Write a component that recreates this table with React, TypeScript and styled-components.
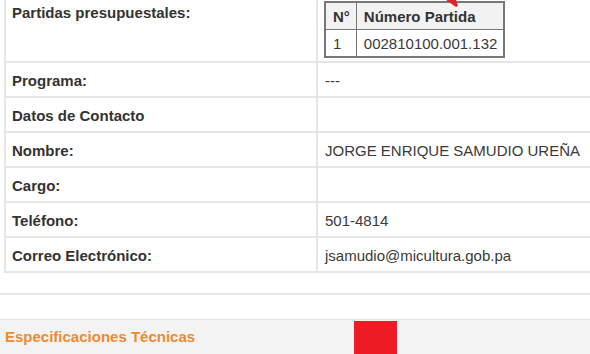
import styled, { createGlobalStyle } from 'styled-components';

const GlobalStyle = createGlobalStyle`
  html, body {
    margin: 0;
    padding: 0;
    overflow: hidden;
    background: #fff;
  }
  body {
    font-family: "Liberation Sans", Arial, sans-serif;
    font-size: 15px;
    line-height: 17px;
    color: #333;
  }
`;

const Page = styled.div`
  position: relative;
  width: 590px;
  height: 354px;
  overflow: hidden;
`;

const InfoTable = styled.div`
  margin-left: 4px;
  width: 660px;
  border-left: 2px solid #e6e6e6;
`;

const Row = styled.div<{ $tall?: boolean }>`
  display: grid;
  grid-template-columns: 312px 1fr;
  border-bottom: 2px solid #e6e6e6;
  height: ${(p) => (p.$tall ? '61px' : '33px')};
`;

const Label = styled.div<{ $top?: boolean }>`
  display: flex;
  align-items: ${(p) => (p.$top ? 'flex-start' : 'center')};
  padding: ${(p) => (p.$top ? '4px 6px 0' : '1px 6px 0')};
  font-weight: bold;
  color: #333;
  border-right: 2px solid #e6e6e6;
`;

const Value = styled.div<{ $top?: boolean }>`
  display: flex;
  align-items: ${(p) => (p.$top ? 'flex-start' : 'center')};
  padding: ${(p) => (p.$top ? '1px 6px 0' : '1px 7px 0')};
  color: #3a3a3a;
`;

// tabla interna de partidas
const Partidas = styled.table`
  border-collapse: collapse;
  border: 2px solid #777;

  th, td {
    border: 1px solid #777;
    padding: 5px 6px 4px 7px;
    text-align: left;
    white-space: nowrap;
  }

  th {
    background: #f2f2f2;
    font-weight: bold;
    color: #333;
  }

  td {
    color: #3a3a3a;
  }
`;

const Arrow = styled.svg`
  position: absolute;
  left: 444px;
  top: 0;
`;

const Spacer = styled.div`
  height: 20px;
`;

const Divider = styled.div`
  height: 2px;
  background: #e6e6e6;
`;

const Section = styled.div`
  margin-top: 24px;
  border-top: 1px solid #e2e2e2;
  background: #f3f3f3;
  height: 60px;
  padding: 8px 5px 0;
  box-sizing: border-box;
`;

const SectionTitle = styled.div`
  font-weight: bold;
  color: #ef8a2f;
`;

const Marker = styled.div`
  position: absolute;
  left: 354px;
  top: 321px;
  width: 43px;
  height: 40px;
  background: #ed1c24;
`;

const rows: [string, string][] = [
  ['Programa:', '---'],
  ['Datos de Contacto', ''],
  ['Nombre:', 'JORGE ENRIQUE SAMUDIO UREÑA'],
  ['Cargo:', ''],
  ['Teléfono:', '501-4814'],
  ['Correo Electrónico:', 'jsamudio@micultura.gob.pa'],
];

export default function App() {
  return (
    <Page>
      <GlobalStyle />
      <InfoTable>
        {/* partidas */}
        <Row $tall>
          <Label $top>Partidas presupuestales:</Label>
          <Value $top>
            <Partidas>
              <thead>
                <tr>
                  <th>N°</th>
                  <th>Número Partida</th>
                </tr>
              </thead>
              <tbody>
                <tr>
                  <td>1</td>
                  <td>002810100.001.132</td>
                </tr>
              </tbody>
            </Partidas>
          </Value>
        </Row>
        {rows.map(([label, value]) => (
          <Row key={label}>
            <Label>{label}</Label>
            <Value>{value}</Value>
          </Row>
        ))}
      </InfoTable>

      <Spacer />
      <Divider />

      <Section>
        <SectionTitle>Especificaciones Técnicas</SectionTitle>
      </Section>

      <Arrow width="20" height="8" viewBox="0 0 20 8">
        <polygon points="2,0 12,0 14,6 12,7" fill="#e8202a" />
      </Arrow>
      <Marker />
    </Page>
  );
}
